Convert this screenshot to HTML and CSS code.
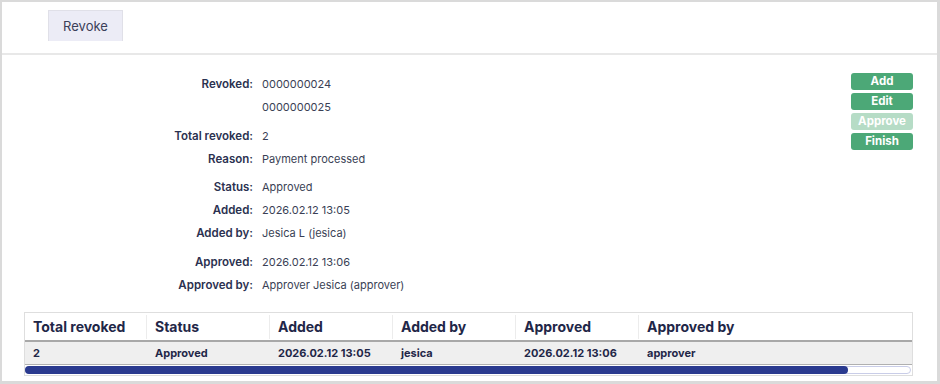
FILE: index.html
```html
<!DOCTYPE html>
<html lang="en">
<head>
    <meta charset="UTF-8">
    <title>Revoke</title>
    <link rel="stylesheet" href="styles.css">
</head>
<body>
<div class="panel">
    <div class="tabs">
        <div class="tab">Revoke</div>
    </div>

    <div class="content">
        <div class="details">
            <div class="group">
                <div class="row">
                    <span class="label">Revoked:</span>
                    <span class="value">0000000024<br>0000000025</span>
                </div>
            </div>
            <div class="group">
                <div class="row">
                    <span class="label">Total revoked:</span>
                    <span class="value">2</span>
                </div>
                <div class="row">
                    <span class="label">Reason:</span>
                    <span class="value">Payment processed</span>
                </div>
            </div>
            <div class="group">
                <div class="row">
                    <span class="label">Status:</span>
                    <span class="value">Approved</span>
                </div>
                <div class="row">
                    <span class="label">Added:</span>
                    <span class="value">2026.02.12 13:05</span>
                </div>
                <div class="row">
                    <span class="label">Added by:</span>
                    <span class="value">Jesica L (jesica)</span>
                </div>
            </div>
            <div class="group">
                <div class="row">
                    <span class="label">Approved:</span>
                    <span class="value">2026.02.12 13:06</span>
                </div>
                <div class="row">
                    <span class="label">Approved by:</span>
                    <span class="value">Approver Jesica (approver)</span>
                </div>
            </div>
        </div>

        <div class="actions">
            <button class="btn">Add</button>
            <button class="btn">Edit</button>
            <button class="btn" disabled>Approve</button>
            <button class="btn">Finish</button>
        </div>
    </div>

    <div class="grid-wrap">
        <table class="grid">
            <thead>
            <tr>
                <th>Total revoked</th>
                <th>Status</th>
                <th>Added</th>
                <th>Added by</th>
                <th>Approved</th>
                <th>Approved by</th>
            </tr>
            </thead>
            <tbody>
            <tr>
                <td>2</td>
                <td>Approved</td>
                <td>2026.02.12 13:05</td>
                <td>jesica</td>
                <td>2026.02.12 13:06</td>
                <td>approver</td>
            </tr>
            </tbody>
        </table>
        <div class="scrollbar">
            <div class="thumb" style="width:92.8%"></div>
        </div>
    </div>
</div>
</body>
</html>
```

FILE: styles.css
```css
* {
    box-sizing: border-box;
    -webkit-font-smoothing: antialiased;
}

body {
    margin: 0;
    background: #dadada;
    font-family: Inter, "Liberation Sans", Arial, sans-serif;
}

.panel {
    margin: 2px 3px 3px 2px;
    height: 379px;
    background: #fff;
    padding: 0 24px 0 22px;
}

.tabs {
    height: 53px;
    padding: 8px 0 0 46px;
    margin: 0 -24px 0 -22px;
    border-bottom: 2px solid #e8e8e8;
}

.tab {
    display: inline-block;
    width: 75px;
    height: 31px;
    line-height: 30px;
    text-align: center;
    font-size: 13px;
    color: #3b4058;
    background: #ececf6;
    border: 1px solid #e0e0e8;
    border-bottom: none;
}

.content {
    display: flex;
    justify-content: space-between;
    padding-top: 18px;
}

.details {
    font-size: 11.5px;
}

.group + .group {
    margin-top: 5.5px;
}

.row {
    display: grid;
    grid-template-columns: 229px auto;
    column-gap: 9px;
    line-height: 23px;
}

.label {
    text-align: right;
    font-weight: 600;
    color: #2b3150;
}

.value {
    font-size: 11px;
    color: #3a3f55;
}

.actions {
    display: flex;
    flex-direction: column;
    gap: 3px;
}

.btn {
    width: 62px;
    height: 17px;
    padding: 0;
    border: none;
    border-radius: 3px;
    background: #4ca877;
    color: #fff;
    font-family: inherit;
    font-size: 11.5px;
    font-weight: 700;
    line-height: 17px;
}

.btn:disabled {
    background: #b6dcc6;
}

.grid-wrap {
    margin-top: 15px;
    border: 1px solid #dedede;
}

.grid {
    width: 100%;
    border-collapse: collapse;
    table-layout: fixed;
}

.grid th,
.grid td {
    text-align: left;
    padding: 0 8px;
    width: 123px;
    color: #1f2748;
    white-space: nowrap;
}

.grid th:first-child,
.grid td:first-child {
    width: 122px;
}

.grid th:last-child,
.grid td:last-child {
    width: auto;
}

.grid th {
    height: 28px;
    font-size: 14px;
    font-weight: 700;
    background-image: linear-gradient(#ececec, #ececec);
    background-size: 1px 24px;
    background-position: right 2px;
    background-repeat: no-repeat;
}

.grid th:last-child {
    background-image: none;
}

.grid tbody tr {
    background: #efefef;
    border-top: 2px solid #a8a8a8;
    border-bottom: 1px solid #b0b0b0;
}

.grid td {
    height: 24px;
    font-size: 11px;
    font-weight: 700;
}

.scrollbar {
    height: 10px;
    padding: 1px 0 1px 0;
    position: relative;
}

.scrollbar::before {
    content: "";
    position: absolute;
    left: 0;
    right: 1px;
    top: 1px;
    bottom: 1px;
    border: 1px solid #c9cde8;
    border-radius: 4px;
}

.thumb {
    position: relative;
    height: 8px;
    background: #2a3a8f;
    border-radius: 4px;
}
```
